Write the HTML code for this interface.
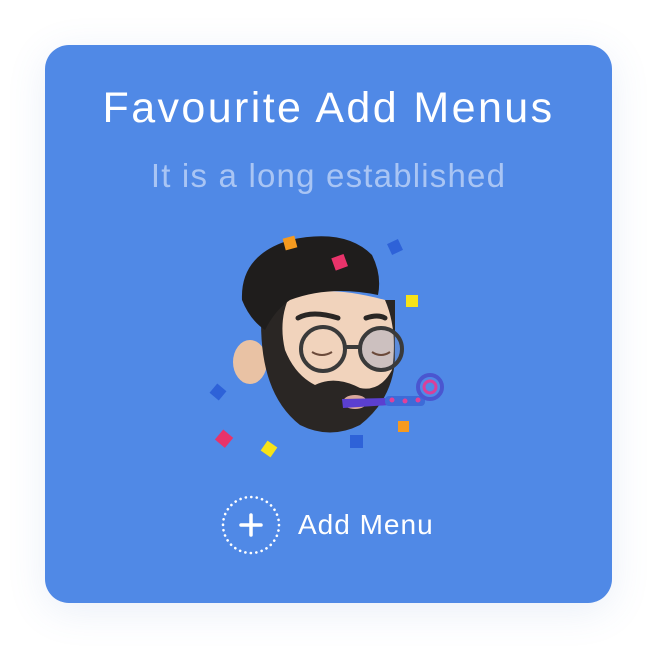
<!DOCTYPE html>
<html><head><style>
html,body{margin:0;padding:0;background:#fff;width:657px;height:648px;overflow:hidden;font-family:"Liberation Sans",Arial,sans-serif}
.card{position:absolute;left:45px;top:45px;width:567px;height:558px;border-radius:24px;background:#5089E6;box-shadow:0 8px 40px rgba(80,120,200,0.12)}
.t{position:absolute;left:45px;width:567px;text-align:center;white-space:nowrap}
</style></head><body>
<div class="card"></div>
<div class="t" style="top:84px;font-size:43px;letter-spacing:2.4px;color:#fff;">Favourite Add Menus</div>
<div class="t" style="top:157px;font-size:33px;letter-spacing:1.2px;color:#A9C5F4;">It is a long established</div>
<svg width="657" height="648" style="position:absolute;left:0;top:0">
  <ellipse cx="250" cy="362" rx="17" ry="22" fill="#E9C2A4"/>
  <path d="M262 300 Q255 390 300 425 Q330 440 360 425 Q392 400 395 360 L395 300 Z" fill="#2a2624"/>
  <path d="M290 295 Q330 285 385 300 Q398 330 392 370 Q380 392 360 388 Q335 375 315 385 Q295 375 285 350 Q278 320 290 295 Z" fill="#F1D3BC"/>
  <path d="M242 300 Q240 255 290 240 Q345 228 372 255 Q382 275 378 295 Q330 285 290 300 Q275 310 265 330 Q250 320 242 300 Z" fill="#1f1d1c"/>
  <path d="M298 318 Q312 310 338 318" stroke="#2a2624" stroke-width="5" fill="none" stroke-linecap="round"/>
  <path d="M366 318 Q378 314 385 318" stroke="#2a2624" stroke-width="5" fill="none" stroke-linecap="round"/>
  <circle cx="323" cy="349" r="22" fill="none" stroke="#3a3a3a" stroke-width="4"/>
  <circle cx="381" cy="349" r="21" fill="rgba(120,150,200,0.3)" stroke="#3a3a3a" stroke-width="4"/>
  <path d="M345 347 L360 347" stroke="#3a3a3a" stroke-width="4"/>
  <path d="M312 352 Q322 358 332 352" stroke="#6b4a3a" stroke-width="2" fill="none"/>
  <path d="M372 352 Q381 358 390 352" stroke="#6b4a3a" stroke-width="2" fill="none"/>
  <ellipse cx="355" cy="402" rx="12" ry="7" fill="#d9a89a"/>
  <path d="M342 399 L385 398 L390 405 L343 408 Z" fill="#5b3fd0"/>
  <rect x="385" y="396" width="40" height="10" rx="4" fill="#3d6bd8"/>
  <circle cx="392" cy="400" r="2.5" fill="#e0409a"/><circle cx="405" cy="401" r="2.5" fill="#e0409a"/><circle cx="418" cy="400" r="2.5" fill="#e0409a"/>
  <circle cx="430" cy="387" r="12" fill="none" stroke="#4a56d0" stroke-width="4"/>
  <circle cx="430" cy="387" r="6" fill="none" stroke="#d8409a" stroke-width="3"/>
  <rect x="284" y="237" width="12" height="12" fill="#F59A1F" transform="rotate(-15 290 243)"/>
  <rect x="333" y="256" width="13" height="13" fill="#E8336A" transform="rotate(-20 339 262)"/>
  <rect x="389" y="241" width="12" height="12" fill="#2E62D8" transform="rotate(-25 395 247)"/>
  <rect x="406" y="295" width="12" height="12" fill="#F7E318"/>
  <rect x="212" y="386" width="12" height="12" fill="#2E62D8" transform="rotate(40 218 392)"/>
  <rect x="218" y="432" width="13" height="13" fill="#E8336A" transform="rotate(40 224 438)"/>
  <rect x="263" y="443" width="12" height="12" fill="#F7E318" transform="rotate(35 269 449)"/>
  <rect x="350" y="435" width="13" height="13" fill="#2E62D8"/>
  <rect x="398" y="421" width="11" height="11" fill="#F59A1F"/>
  <circle cx="251" cy="525" r="28" fill="none" stroke="#fff" stroke-width="2.6" stroke-dasharray="0.1 5.4" stroke-linecap="round"/>
  <path d="M251 515 V535 M241 525 H261" stroke="#fff" stroke-width="3.5" stroke-linecap="round"/>
  <text x="298" y="534" font-size="28" letter-spacing="1" fill="#fff" font-family="Liberation Sans, Arial, sans-serif">Add Menu</text>
</svg>
</body></html>
